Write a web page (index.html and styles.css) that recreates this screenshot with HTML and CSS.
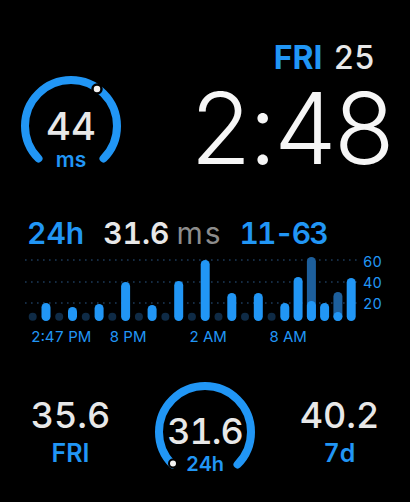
FILE: index.html
```html
<!DOCTYPE html>
<html lang="en">
<head>
    <meta charset="UTF-8">
    <meta name="viewport" content="width=device-width, initial-scale=1.0">
    <title>HRV watch face</title>
    <link rel="stylesheet" href="styles.css">
</head>
<body>
    <div class="face">
        <!-- Верх: текущий HRV и часы -->
        <section class="top">
            <div class="ring ring-current">
                <svg class="ring-svg" viewBox="0 0 100 100" width="100" height="100">
                    <path class="ring-arc" d="M 17.47 82.53 A 46 46 0 1 1 82.53 82.53"/>
                    <circle class="ring-dot" cx="76" cy="13" r="4.5"/>
                </svg>
                <div class="ring-text">
                    <span class="ring-value">44</span>
                    <span class="ring-unit">ms</span>
                </div>
            </div>
            <div class="clock">
                <div class="date"><span class="date-day">FRI</span><span class="date-num">25</span></div>
                <div class="time">2:48</div>
            </div>
        </section>

        <!-- График за 24 часа -->
        <section class="chart">
            <div class="chart-head">
                <span class="accent">24h</span><span class="head-value">31.6</span><span class="head-unit">ms</span><span class="accent head-range">11-63</span>
            </div>
            <svg class="bars" width="410" height="96" viewBox="0 0 410 96">
                <g class="grid">
                    <line x1="25" y1="10" x2="357" y2="10"/>
                    <line x1="25" y1="32" x2="357" y2="32"/>
                    <line x1="25" y1="53" x2="357" y2="53"/>
                </g>
                <g class="empty">
                    <circle cx="32.7" cy="66.7" r="4"/>
                    <circle cx="59.2" cy="66.7" r="4"/>
                    <circle cx="85.8" cy="66.7" r="4"/>
                    <circle cx="112.3" cy="66.7" r="4"/>
                    <circle cx="138.9" cy="66.7" r="4"/>
                    <circle cx="165.4" cy="66.7" r="4"/>
                    <circle cx="191.9" cy="66.7" r="4"/>
                    <circle cx="218.5" cy="66.7" r="4"/>
                    <circle cx="245.0" cy="66.7" r="4"/>
                    <circle cx="271.6" cy="66.7" r="4"/>
                </g>
                <g class="range">
                    <rect x="306.9" y="7" width="9" height="64" rx="4.5"/>
                    <rect x="333.4" y="42" width="9" height="29" rx="4.5"/>
                </g>
                <g class="bar">
                    <rect x="41.5" y="53" width="9" height="18" rx="4.5"/>
                    <rect x="68.0" y="57" width="9" height="14" rx="4.5"/>
                    <rect x="94.6" y="54" width="9" height="17" rx="4.5"/>
                    <rect x="121.1" y="32" width="9" height="39" rx="4.5"/>
                    <rect x="147.6" y="55" width="9" height="16" rx="4.5"/>
                    <rect x="174.2" y="31" width="9" height="40" rx="4.5"/>
                    <rect x="200.7" y="10" width="9" height="61" rx="4.5"/>
                    <rect x="227.3" y="43" width="9" height="28" rx="4.5"/>
                    <rect x="253.8" y="43" width="9" height="28" rx="4.5"/>
                    <rect x="280.3" y="53" width="9" height="18" rx="4.5"/>
                    <rect x="293.6" y="27" width="9" height="44" rx="4.5"/>
                    <rect x="306.9" y="51" width="9" height="20" rx="4.5"/>
                    <rect x="320.1" y="53" width="9" height="18" rx="4.5"/>
                    <rect x="333.4" y="62" width="9" height="9" rx="4.5"/>
                    <rect x="346.7" y="28" width="9" height="43" rx="4.5"/>
                </g>
                <g class="axis-y">
                    <text x="363" y="17">60</text>
                    <text x="363" y="38">40</text>
                    <text x="363" y="59">20</text>
                </g>
                <g class="axis-x">
                    <text x="31" y="92">2:47 PM</text>
                    <text x="128" y="92" text-anchor="middle">8 PM</text>
                    <text x="208" y="92" text-anchor="middle">2 AM</text>
                    <text x="288" y="92" text-anchor="middle">8 AM</text>
                </g>
            </svg>
        </section>

        <!-- Низ: средние значения -->
        <section class="stats">
            <div class="stat">
                <div class="stat-value">35.6</div>
                <div class="stat-label">FRI</div>
            </div>
            <div class="ring ring-avg">
                <svg class="ring-svg" viewBox="0 0 100 100" width="100" height="100">
                    <path class="ring-arc" d="M 17.47 82.53 A 46 46 0 1 1 82.53 82.53"/>
                    <circle class="ring-dot small" cx="18" cy="81.5" r="4"/>
                </svg>
                <div class="ring-text">
                    <span class="ring-value">31.6</span>
                    <span class="ring-unit">24h</span>
                </div>
            </div>
            <div class="stat">
                <div class="stat-value">40.2</div>
                <div class="stat-label">7d</div>
            </div>
        </section>
    </div>
</body>
</html>
```

FILE: styles.css
```css
:root {
    --blue: #2196f5;
    --blue-dark: #1d5f9c;
    --navy: #0f2b46;
    --grid: #1c3a5a;
    --text: #e8e8e8;
    --muted: #8c8c8c;
}

* {
    box-sizing: border-box;
    margin: 0;
    padding: 0;
}

body {
    background-color: #000;
    color: var(--text);
    font-family: Inter, 'Noto Sans', sans-serif;
    font-variant-numeric: tabular-nums;
}

.face {
    width: 410px;
    height: 502px;
    overflow: hidden;
}

/* верхний блок */
.top {
    display: flex;
    justify-content: space-between;
    align-items: flex-start;
    height: 200px;
    padding: 0 21px 0 21px;
}

.ring {
    display: grid;
    width: 100px;
    height: 100px;
}

.ring > * {
    grid-area: 1 / 1;
}

.ring-current {
    margin-top: 76px;
}

.ring-arc {
    fill: none;
    stroke: var(--blue);
    stroke-width: 8;
    stroke-linecap: round;
}

.ring-dot {
    fill: #f2f2f2;
    stroke: #000;
    stroke-width: 2.5;
}

.ring-dot.small {
    stroke-width: 2;
}

.ring-text {
    display: flex;
    flex-direction: column;
    align-items: center;
}

.ring-current .ring-text {
    padding-top: 29.5px;
}

.ring-current .ring-value {
    font-size: 38.5px;
    line-height: 40px;
    font-weight: 500;
}

.ring-current .ring-unit {
    margin-top: 3px;
    font-size: 21px;
    line-height: 21px;
    font-weight: 600;
    color: var(--blue);
}

.clock {
    display: flex;
    flex-direction: column;
    align-items: flex-end;
    padding-top: 42px;
}

.date {
    display: flex;
    padding-right: 14px;
    font-size: 32px;
    line-height: 32px;
    font-weight: 700;
}

.date-day {
    color: var(--blue);
}

.date-num {
    margin-left: 11px;
    font-weight: 500;
}

.time {
    margin-top: 14px;
    margin-right: -3px;
    font-size: 99px;
    line-height: 80px;
    font-weight: 300;
    font-variant-numeric: normal;
    letter-spacing: -2.5px;
    color: #f6f6f6;
}

/* график */
.chart {
    padding-top: 18px;
}

.chart-head {
    display: flex;
    align-items: baseline;
    padding-left: 27px;
    font-size: 30px;
    line-height: 30px;
    font-weight: 600;
    white-space: nowrap;
}

.accent {
    color: var(--blue);
}

.head-value {
    margin-left: 19px;
}

.head-unit {
    margin-left: 7px;
    font-weight: 400;
    letter-spacing: 2px;
    color: var(--muted);
}

.head-range {
    margin-left: 17px;
    letter-spacing: -2px;
}

.bars {
    display: block;
    margin-top: 2px;
}

.grid line {
    stroke: var(--grid);
    stroke-width: 1.6;
    stroke-dasharray: 1.6 4.4;
}

.empty circle {
    fill: var(--navy);
}

.range rect {
    fill: var(--blue-dark);
}

.bar rect {
    fill: var(--blue);
}

.axis-y text {
    font-family: Inter, 'Noto Sans', sans-serif;
    font-size: 14.5px;
    fill: var(--blue);
}

.axis-x text {
    font-family: Inter, 'Noto Sans', sans-serif;
    font-size: 15px;
    fill: var(--blue);
}

/* нижний блок */
.stats {
    display: grid;
    grid-template-columns: 141px 1fr 141px;
    justify-items: center;
    align-items: start;
    padding-top: 36px;
}

.stat {
    padding-top: 15px;
    text-align: center;
}

.stat-value {
    font-size: 36px;
    line-height: 36px;
    font-weight: 500;
}

.stat-label {
    margin-top: 8.4px;
    font-size: 25px;
    line-height: 25px;
    font-weight: 600;
    color: var(--blue);
}

.ring-avg .ring-text {
    padding-top: 31px;
}

.ring-avg .ring-value {
    font-size: 36px;
    line-height: 36px;
    font-weight: 500;
    letter-spacing: -1px;
}

.ring-avg .ring-unit {
    margin-top: 4.8px;
    font-size: 20px;
    line-height: 20px;
    font-weight: 600;
    color: var(--blue);
}
```
